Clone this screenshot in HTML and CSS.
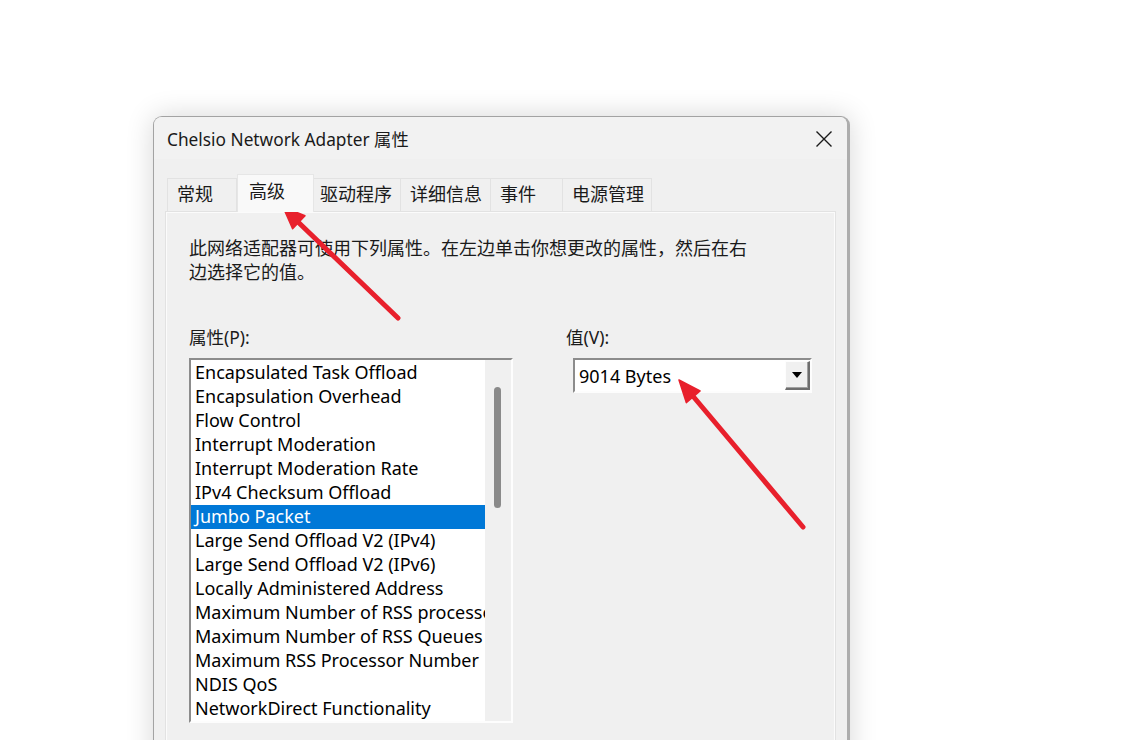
FILE: index.html
```html
<!DOCTYPE html>
<html lang="zh-CN">
<head>
<meta charset="utf-8">
<title>Chelsio Network Adapter 属性</title>
<link rel="stylesheet" href="styles.css">
</head>
<body>
<div class="window">
  <div class="titlebar">
    <span class="title">Chelsio Network Adapter 属性</span>
    <span class="close" aria-label="关闭">
      <svg width="18" height="18" viewBox="0 0 18 18"><path d="M1.5 1.5 L16.5 16.5 M16.5 1.5 L1.5 16.5" stroke="#1a1a1a" stroke-width="1.4" fill="none"/></svg>
    </span>
  </div>
  <div class="tabs">
    <div class="tab t1">常规</div>
    <div class="tab t2 active">高级</div>
    <div class="tab t3">驱动程序</div>
    <div class="tab t4">详细信息</div>
    <div class="tab t5">事件</div>
    <div class="tab t6">电源管理</div>
  </div>
  <div class="panel">
    <p class="desc">此网络适配器可使用下列属性。在左边单击你想更改的属性，然后在右边选择它的值。</p>
    <div class="cols">
      <div class="col-left">
        <div class="label">属性(P):</div>
        <div class="listbox">
          <ul class="items">
            <li>Encapsulated Task Offload</li>
            <li>Encapsulation Overhead</li>
            <li>Flow Control</li>
            <li>Interrupt Moderation</li>
            <li>Interrupt Moderation Rate</li>
            <li>IPv4 Checksum Offload</li>
            <li class="sel">Jumbo Packet</li>
            <li>Large Send Offload V2 (IPv4)</li>
            <li>Large Send Offload V2 (IPv6)</li>
            <li>Locally Administered Address</li>
            <li>Maximum Number of RSS processors</li>
            <li>Maximum Number of RSS Queues</li>
            <li>Maximum RSS Processor Number</li>
            <li>NDIS QoS</li>
            <li>NetworkDirect Functionality</li>
          </ul>
          <div class="scroll"><div class="thumb"></div></div>
        </div>
      </div>
      <div class="col-right">
        <div class="label">值(V):</div>
        <div class="combo">
          <span class="combo-text">9014 Bytes</span>
          <span class="combo-btn"><svg width="10" height="6" viewBox="0 0 10 6"><path d="M0 0 H10 L5 6 Z" fill="#000"/></svg></span>
        </div>
      </div>
    </div>
  </div>
</div>
<svg class="arrows" width="1148" height="740" viewBox="0 0 1148 740">
  <g stroke="#e8202c" stroke-width="5" stroke-linecap="round" fill="#e8202c">
    <line x1="398" y1="318" x2="297" y2="221"/>
    <line x1="803" y1="527" x2="692" y2="395"/>
  </g>
  <g fill="#e8202c" stroke="#e8202c" stroke-width="1.5" stroke-linejoin="round">
    <polygon points="283,207 305,215.8 292.6,228.8"/>
    <polygon points="679,380 700.1,391 686.3,402.6"/>
  </g>
</svg>
</body>
</html>
```
FILE: styles.css
```css
* { box-sizing: border-box; }
html, body {
  margin: 0;
  padding: 0;
  background: #ffffff;
  height: 740px;
  overflow: hidden;
}
body {
  position: relative;
  font-family: "Noto Sans", "Noto Sans CJK SC", sans-serif;
  color: #000;
}
.window {
  margin: 116px 0 0 153px;
  width: 697px;
  height: 700px;
  background: #f0f0f0;
  border: 1px solid #a3a3a3;
  border-right: 3px solid #adadad;
  border-radius: 9px 9px 0 0;
  box-shadow: 0 0 28px rgba(0, 0, 0, 0.16);
}
.titlebar {
  height: 42px;
  display: flex;
  align-items: center;
  justify-content: space-between;
  padding: 0 14px 0 13px;
  background: #f2f2f2;
  border-radius: 8px 8px 0 0;
}
.title {
  font-size: 17.3px;
  color: #1a1a1a;
  font-family: "Noto Sans", "Noto Sans CJK SC", sans-serif;
}
.close {
  display: flex;
  width: 18px;
  height: 18px;
  margin-top: 2px;
}
.tabs {
  margin: 15px 0 0 13px;
  height: 37px;
  display: flex;
  align-items: flex-end;
  font-family: "Noto Sans CJK SC", sans-serif;
  font-size: 18px;
  position: relative;
  z-index: 1;
}
.tab {
  height: 33px;
  line-height: 28px;
  background: #f0f0f0;
  border: 1px solid #e2e2e2;
  border-bottom: none;
  padding-left: 9px;
  color: #1a1a1a;
}
.tab + .tab { border-left: none; }
.t1 { width: 70px; }
.t2 { width: 77px; padding-left: 11px; }
.t3 { width: 87px; padding-left: 6px; }
.t4 { width: 90px; }
.t5 { width: 72px; padding-left: 9px; }
.t6 { width: 89px; }
.tab.active {
  height: 38px;
  line-height: 31px;
  margin-bottom: -1px;
  background: #f9f9f9;
  border: 1px solid #e6e6e6;
  border-bottom: none;
}
.panel {
  margin-left: 11px;
  width: 671px;
  height: 600px;
  border: 1px solid #e2e2e2;
  box-shadow: inset 0 0 0 1px #fbfbfb;
  background: #f0f0f0;
  padding: 23px 0 0 23px;
}
.desc {
  margin: 0;
  width: 566px;
  font-family: "Noto Sans CJK SC", sans-serif;
  font-size: 18px;
  line-height: 24px;
  color: #1a1a1a;
}
.cols {
  display: flex;
  margin-top: 43px;
}
.col-left { width: 377px; }
.label {
  font-size: 17.5px;
  line-height: 23px;
  height: 24px;
  margin-bottom: 8px;
  color: #1a1a1a;
}
.listbox {
  width: 324px;
  height: 365px;
  display: flex;
  border-top: 2px solid #8c8c8c;
  border-left: 2px solid #8c8c8c;
  border-right: 2px solid #fdfdfd;
  border-bottom: 2px solid #fdfdfd;
  background: #f0f0f0;
}
.items {
  list-style: none;
  margin: 0;
  padding: 1px 0 0 0;
  width: 294px;
  background: #fff;
  overflow: hidden;
}
.items li {
  height: 24px;
  line-height: 22px;
  padding-left: 4px;
  font-size: 18px;
  white-space: nowrap;
  overflow: hidden;
  color: #000;
}
.items li.sel {
  background: #0078d7;
  color: #fff;
}
.scroll {
  flex: 1;
  background: #f0f0f0;
  padding: 27px 0 0 9px;
}
.thumb {
  width: 7px;
  height: 121px;
  border-radius: 4px;
  background: #8a8a8a;
}
.combo {
  margin-left: 7px;
  width: 239px;
  height: 35px;
  display: flex;
  align-items: center;
  justify-content: space-between;
  background: #fff;
  border-top: 2px solid #8c8c8c;
  border-left: 2px solid #8c8c8c;
  border-right: 2px solid #fdfdfd;
  border-bottom: 2px solid #fdfdfd;
  padding: 0 0 0 4px;
}
.combo-text {
  font-size: 18px;
  line-height: 22px;
  color: #000;
}
.combo-btn {
  width: 25px;
  height: 29px;
  display: flex;
  align-items: center;
  justify-content: center;
  background: #f0f0f0;
  border-top: 1px solid #fdfdfd;
  border-left: 1px solid #fdfdfd;
  border-right: 2px solid #6d6d6d;
  border-bottom: 2px solid #6d6d6d;
  box-shadow: inset -1px -1px 0 #a0a0a0;
}
.arrows {
  position: absolute;
  left: 0;
  top: 0;
  pointer-events: none;
}
```
